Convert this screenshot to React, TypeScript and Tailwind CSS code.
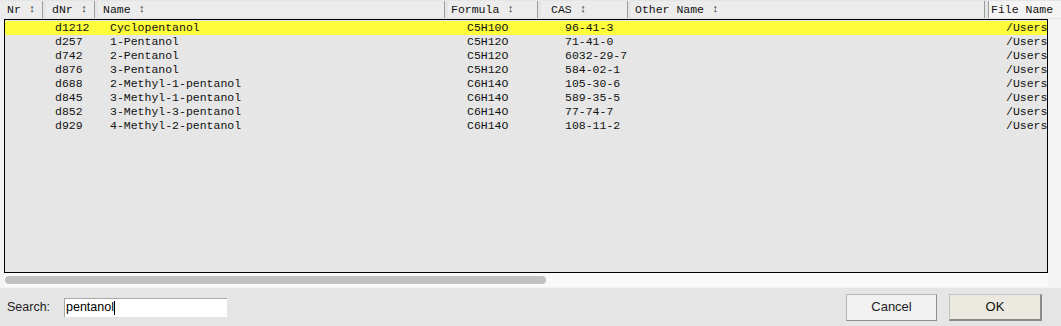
import React from "react";

const ROWS = [
    { dnr: "d1212", name: "Cyclopentanol", formula: "C5H10O", cas: "96-41-3" },
    { dnr: "d257", name: "1-Pentanol", formula: "C5H12O", cas: "71-41-0" },
    { dnr: "d742", name: "2-Pentanol", formula: "C5H12O", cas: "6032-29-7" },
    { dnr: "d876", name: "3-Pentanol", formula: "C5H12O", cas: "584-02-1" },
    { dnr: "d688", name: "2-Methyl-1-pentanol", formula: "C6H14O", cas: "105-30-6" },
    { dnr: "d845", name: "3-Methyl-1-pentanol", formula: "C6H14O", cas: "589-35-5" },
    { dnr: "d852", name: "3-Methyl-3-pentanol", formula: "C6H14O", cas: "77-74-7" },
    { dnr: "d929", name: "4-Methyl-2-pentanol", formula: "C6H14O", cas: "108-11-2" },
];

const HEADERS = [
    { label: "Nr", w: "w-[46px]", pl: "pl-[7px]" },
    { label: "dNr", w: "w-[52px]", pl: "pl-[6px]" },
    { label: "Name", w: "w-[350px]", pl: "pl-[5px]" },
    { label: "Formula", w: "w-[93px]", pl: "pl-[3px]" },
    { label: "CAS", w: "w-[90px]", pl: "pl-[10px]" },
    { label: "Other Name", w: "w-[357px]", pl: "pl-[4px]" },
];

const mono = "font-[family-name:'Liberation_Mono',monospace] text-[11.5px] text-[#111]";
const sans = "font-[family-name:'Liberation_Sans',Arial,sans-serif]";

export default function App() {
    return (
        <div className="w-[1061px] h-[326px] bg-[#e5e5e5] flex flex-col overflow-hidden">
            {/* column headers */}
            <div className={`flex h-[19px] pt-[1px] ${mono}`}>
                {HEADERS.map((h, i) => (
                    <div
                        key={i}
                        className={`${h.w} shrink-0 h-[17px] bg-[#ececec] border-r-[3px] border-r-[#e5e5e5] shadow-[inset_-1px_0_0_#9c9c9c] flex items-center ${h.pl}`}>
                        <span>{h.label}</span>
                        <span className="ml-[8px] text-[11px] text-[#333]">↕</span>
                    </div>
                ))}
                <div className="flex-1 h-[17px] bg-[#f4f4f4] border-l border-[#9c9c9c] flex items-center pl-[2px]">
                    File Name
                </div>
            </div>

            {/* body + scrollbar */}
            <div className="flex bg-[#f3f3f3] h-[269px]">
                <div className="w-[1048px] pl-[4px] flex flex-col">
                    <div className="h-[254px] border border-black bg-[#e6e6e6] pt-[1px] overflow-hidden">
                        {ROWS.map((r, i) => (
                            <div
                                key={i}
                                className={`h-[14px] flex items-center whitespace-nowrap ${mono} ${i === 0 ? "bg-[#fdfd3c]" : ""}`}>
                                <span className="w-[50px] shrink-0" />
                                <span className="w-[55px] shrink-0">{r.dnr}</span>
                                <span className="w-[357px] shrink-0">{r.name}</span>
                                <span className="w-[98px] shrink-0">{r.formula}</span>
                                <span className="w-[441px] shrink-0">{r.cas}</span>
                                <span className="flex-1 overflow-hidden">/Users</span>
                            </div>
                        ))}
                    </div>
                    <div className="h-[14px] bg-[#f9f9f9] flex items-center pl-[1px]">
                        <div className="w-[541px] h-[8px] rounded-full bg-[#c1c1c1]" />
                    </div>
                </div>
                <div className="flex-1" />
            </div>

            {/* search / buttons */}
            <div className={`flex items-center h-[38px] pl-[7px] pr-[19px] ${sans} text-[12.5px] text-[#222]`}>
                <span className="w-[57px]">Search:</span>
                <div className="w-[163px] h-[19px] bg-white border-t border-l border-[#a8a8a8] flex items-center pl-[1px] text-black">
                    pentanol<span className="w-px h-[14px] bg-black" />
                </div>
                <div className="flex-1" />
                <button className="w-[91px] h-[27px] bg-[#f1f1f1] border border-[#b8b8b8] border-b-[#8e8e8e] border-r-[#8e8e8e] text-[13px] text-[#222]">
                    Cancel
                </button>
                <button className="ml-[12px] w-[93px] h-[27px] bg-[#ece9e0] border border-[#c4c4c4] border-b-2 border-r-2 border-b-[#8a8a8a] border-r-[#8a8a8a] text-[13px] text-[#111]">
                    OK
                </button>
            </div>
        </div>
    );
}
